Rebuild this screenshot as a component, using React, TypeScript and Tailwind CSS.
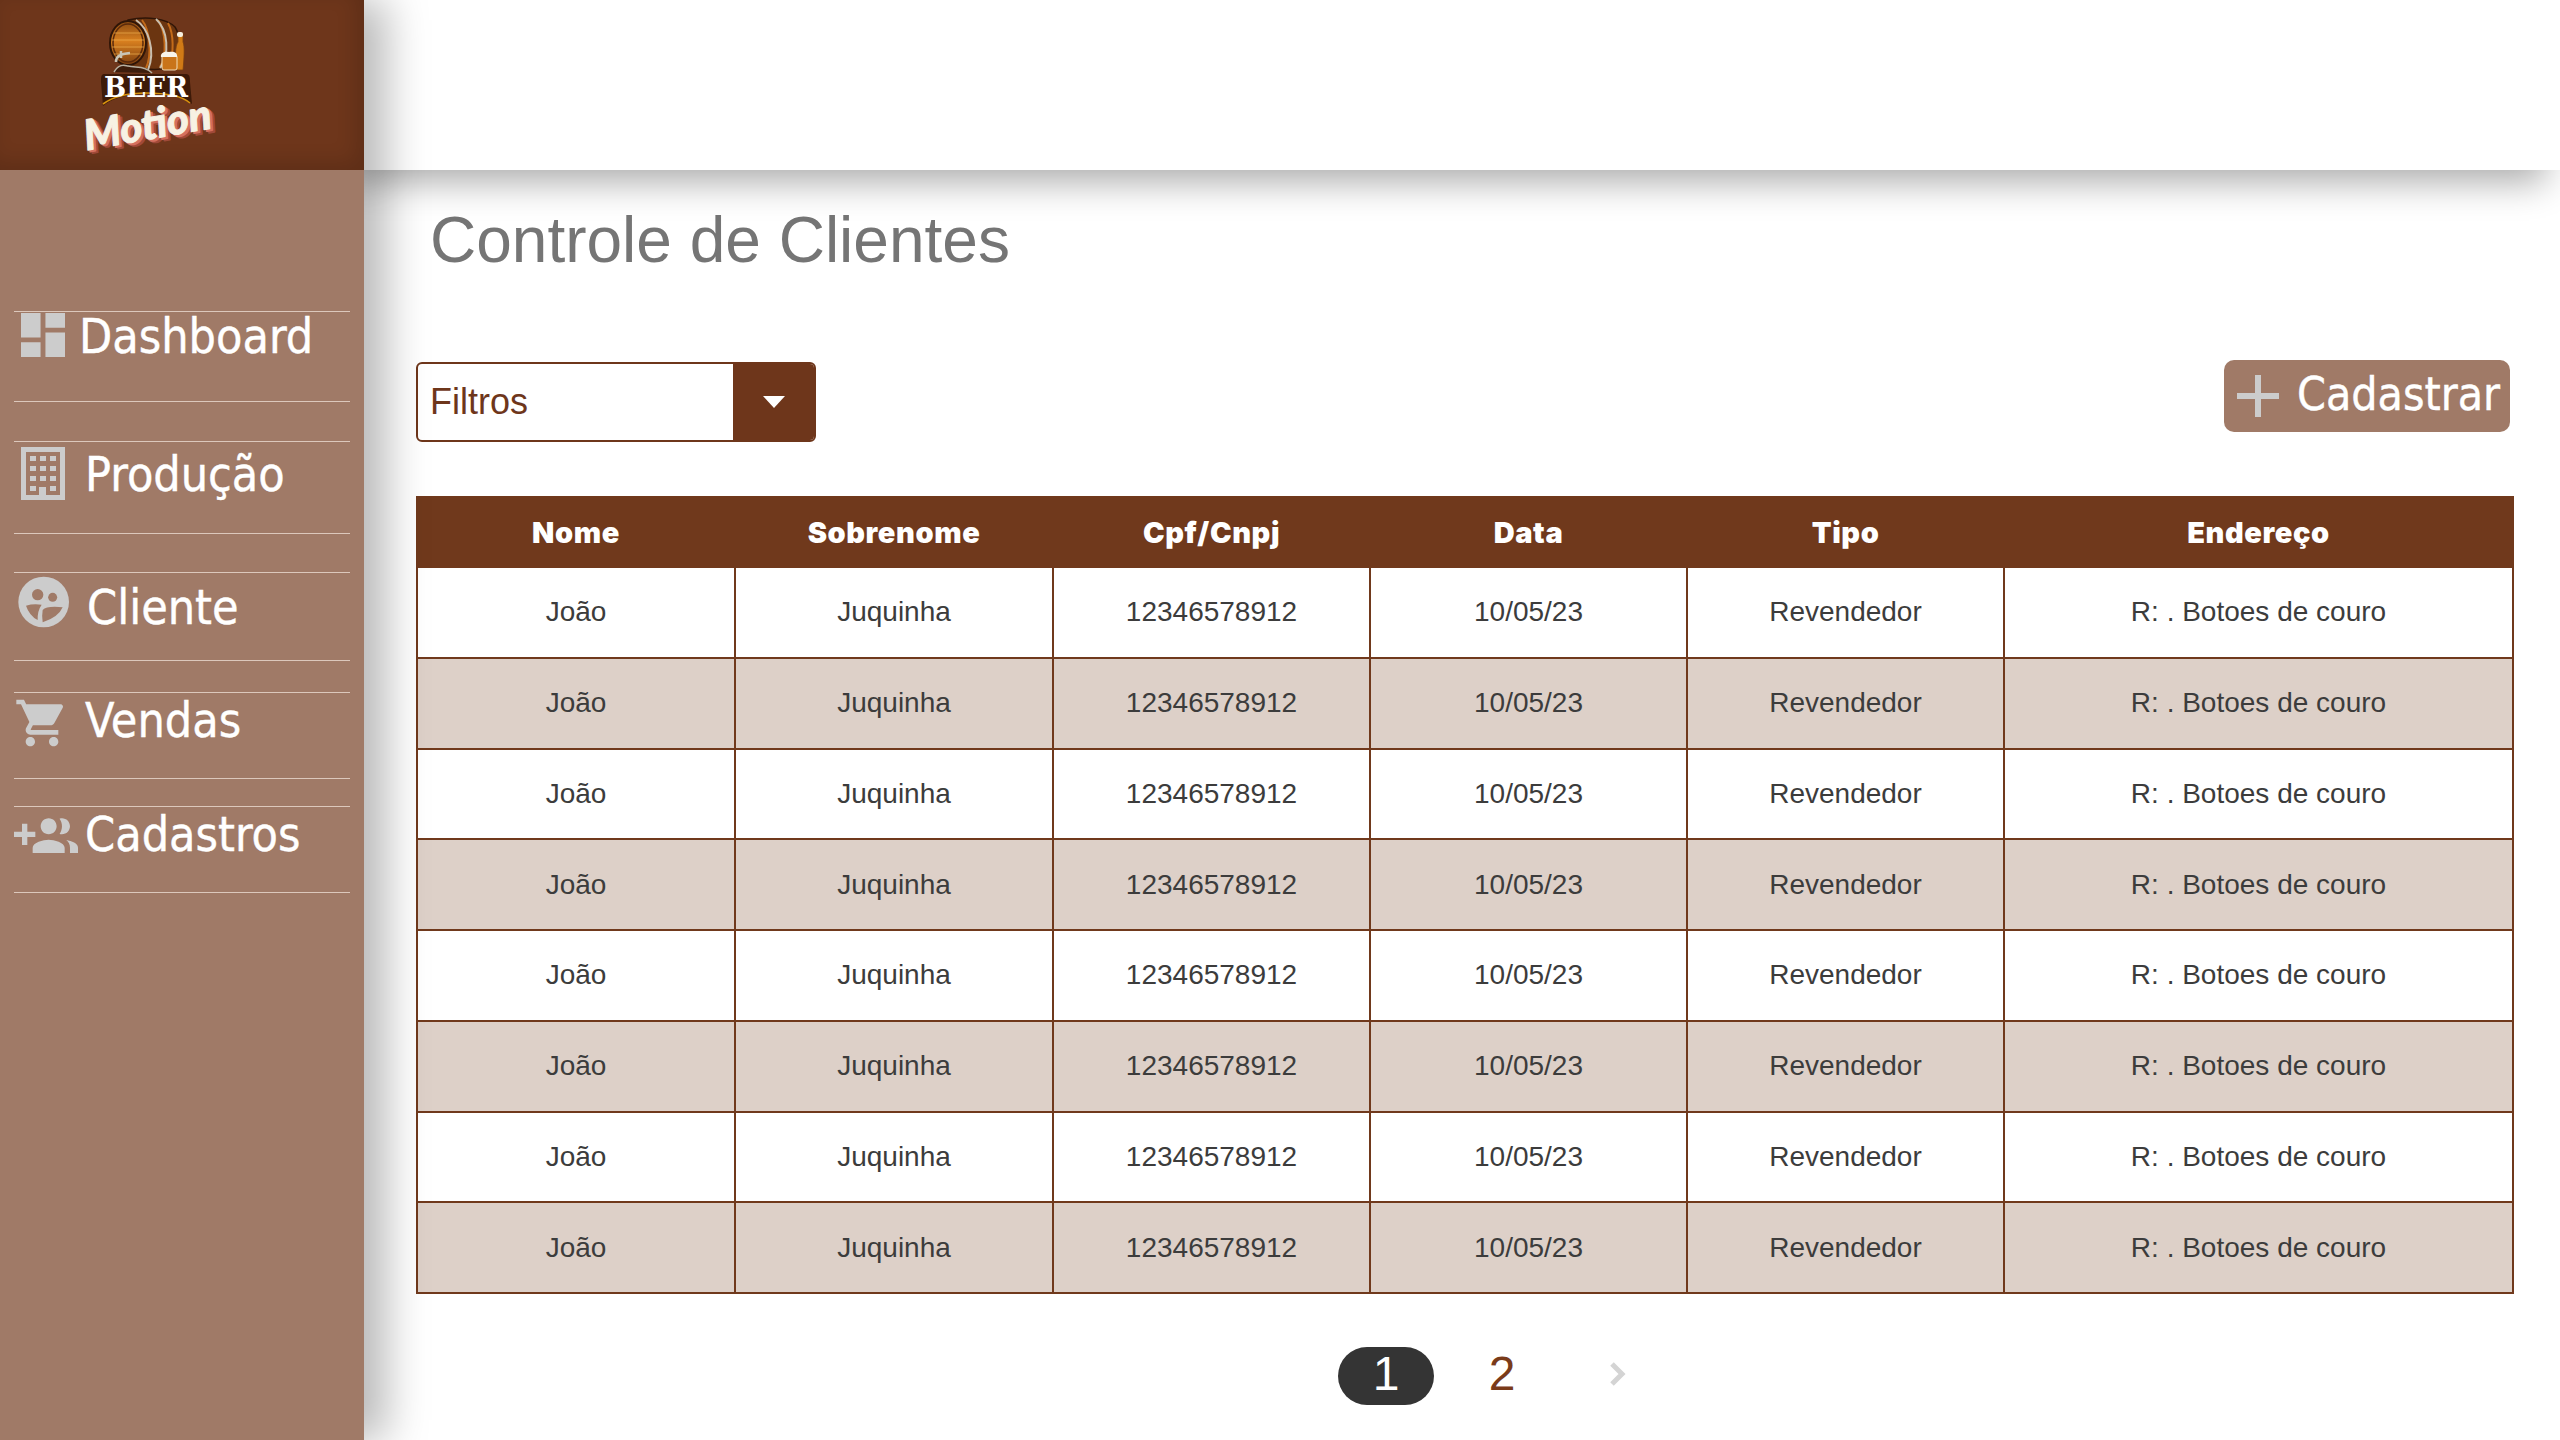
import type { ReactNode } from "react";
import { MdShoppingCart } from "react-icons/md";

const columns = ["Nome", "Sobrenome", "Cpf/Cnpj", "Data", "Tipo", "Endereço"];
const row = ["João", "Juquinha", "12346578912", "10/05/23", "Revendedor", "R: . Botoes de couro"];
const rows = [0, 1, 2, 3, 4, 5, 6, 7];

function Logo() {
  return (
    <svg viewBox="0 0 364 170" className="w-[364px] h-[170px]">
      <defs>
        <linearGradient id="wood" x1="0" y1="0" x2="0" y2="1">
          <stop offset="0" stopColor="#8a4a12" />
          <stop offset="0.45" stopColor="#d9801f" />
          <stop offset="1" stopColor="#7d3f10" />
        </linearGradient>
      </defs>
      {/* barrel */}
      <path d="M128 20C146 16 166 18 175 27C181 36 181 55 174 64C165 72 146 70 128 66Z" fill="#6b3510" stroke="#2f1507" strokeWidth="1.5" />
      <path d="M142 20C150 30 152 55 146 68M158 20C166 32 167 56 160 67M168 23C174 34 174 54 169 64" fill="none" stroke="#c36b1a" strokeWidth="2" />
      <path d="M136 20C148 28 156 50 148 70" fill="none" stroke="#c9bfae" strokeWidth="2" />
      <path d="M156 19C168 30 170 54 160 68" fill="none" stroke="#c9bfae" strokeWidth="2" />
      <ellipse cx="128" cy="43" rx="18" ry="22" fill="url(#wood)" stroke="#2f1507" strokeWidth="2" />
      <ellipse cx="128" cy="43" rx="15" ry="19" fill="none" stroke="#5a2a0c" strokeWidth="1.5" />
      <path d="M114 33H142M112 40H144M112 47H144M114 54H142" stroke="#f0b050" strokeWidth="1.2" opacity="0.7" />
      {/* tap and stand */}
      <path d="M116 62C116 56 120 54 130 53M121 51V58" fill="none" stroke="#c9c4b5" strokeWidth="2.5" />
      <path d="M114 72C120 62 126 66 128 66C136 68 146 66 152 73" fill="#3d1d0c" stroke="#b8b0a0" strokeWidth="1.5" />
      {/* bottle and mug */}
      <path d="M178 33H183V42C185 46 184 60 183 70H176C175 58 175 46 178 42Z" fill="#d07a16" stroke="#7a3f10" strokeWidth="0.8" />
      <rect x="177" y="32" width="6" height="5" rx="2" fill="#f6f0e2" />
      <rect x="162" y="55" width="15" height="15" rx="2" fill="#c9741a" stroke="#f0dcb8" strokeWidth="1" />
      <path d="M161 57C160 52 166 51 169 52C173 51 178 52 177 57Z" fill="#f8f4ea" />
      {/* badge */}
      <path d="M104 74H186C190 74 190 78 190 82L192 104C182 96 166 94 146 94C128 94 112 98 103 106L101 82C101 78 101 74 104 74Z" fill="#3d1a08" />
      <path d="M103 104C114 96 128 93 146 93C166 93 182 96 190 103" fill="none" stroke="#d8930e" strokeWidth="1.6" />
      <text x="146" y="97" textAnchor="middle" fontFamily="'DejaVu Serif', serif" fontWeight="900" fontSize="27" textLength="84" lengthAdjust="spacingAndGlyphs" fill="#ffffff">BEER</text>
      {/* script */}
      <g transform="rotate(-10 150 128)" fontFamily="Lato, sans-serif" fontStyle="italic" fontWeight="900" fontSize="42" textAnchor="middle" strokeLinejoin="round">
        <text x="152" y="143" fill="#a04a3a" stroke="#a04a3a" strokeWidth="1.5">Motion</text>
        <text x="150" y="141" fill="#d4705f" stroke="#d4705f" strokeWidth="1.5">Motion</text>
        <text x="148" y="139" fill="#f7f1e3" stroke="#f7f1e3" strokeWidth="1">Motion</text>
      </g>
    </svg>
  );
}

function ProductionIcon() {
  const cells = [
    [9, 9], [19, 9], [29, 9],
    [9, 19], [19, 19], [29, 19],
    [9, 29], [19, 29], [29, 29],
    [9, 39], [29, 39],
  ];
  return (
    <svg viewBox="0 0 44 53" className="w-11 h-[53px] ml-[7px] mt-[5px]">
      <path fillRule="evenodd" d="M0 0H44V53H0ZM5 5V48H18V40H25V48H39V5Z" fill="#cccccc" />
      {cells.map(([x, y]) => (
        <rect key={`${x}-${y}`} x={x} y={y} width="6" height="5" fill="#cccccc" />
      ))}
    </svg>
  );
}

function ClientIcon() {
  return (
    <svg viewBox="54 46 156 156" className="w-[52px] h-[52px] ml-1 mt-[3px]">
      <circle cx="131" cy="124" r="76" fill="#cccccc" />
      <circle cx="113" cy="102" r="17" fill="#a07a67" />
      <circle cx="158" cy="110" r="13.5" fill="#a07a67" />
      <path d="M78 135Q100 128 125 132Q112 150 113 178Q88 165 78 135Z" fill="#a07a67" />
      <path d="M128 148Q140 135 188 140Q175 170 128 185Q125 165 128 148Z" fill="#a07a67" />
    </svg>
  );
}

function NavItem({ icon, label, className, textClass }: { icon: ReactNode; label: string; className: string; textClass: string }) {
  return (
    <div className={`flex items-start mx-[14px] border-y border-[#dcc8bc] ${className}`}>
      {icon}
      <span className={`text-[48px] leading-[48px] text-white [-webkit-text-stroke:0.4px_white] font-['DejaVu_Sans_Condensed','DejaVu_Sans',sans-serif] ${textClass}`}>
        {label}
      </span>
    </div>
  );
}

export default function App() {
  return (
    <div className="flex h-screen overflow-hidden bg-white font-['Liberation_Sans',sans-serif]">
      <aside className="relative z-20 w-[364px] shrink-0 bg-[#a07a67] shadow-[22px_0_40px_rgba(0,0,0,0.28)]">
        <div className="h-[170px] bg-[#6e361b] shadow-[inset_-8px_-8px_20px_rgba(0,0,0,0.14)]">
          <Logo />
        </div>
        <nav className="pt-[141px]">
          <NavItem
            label="Dashboard"
            className="h-[91px]"
            textClass="ml-3.5"
            icon={
              <svg viewBox="3 3 18 18" className="w-11 h-11 ml-[7px] mt-px" fill="#cccccc">
                <path d="M3 13h8V3H3v10zm0 8h8v-6H3v6zm10 0h8V11h-8v10zm0-18v6h8V3h-8z" />
              </svg>
            }
          />
          <NavItem label="Produção" className="h-[93px] mt-[39px]" textClass="ml-5 pt-2" icon={<ProductionIcon />} />
          <NavItem label="Cliente" className="h-[89px] mt-[38px]" textClass="ml-[17px] pt-2.5" icon={<ClientIcon />} />
          <NavItem
            label="Vendas"
            className="h-[87px] mt-[31px]"
            textClass="ml-[15px] pt-[3px]"
            icon={<MdShoppingCart className="w-14 h-14 mt-0.5 text-[#cccccc]" />}
          />
          <NavItem
            label="Cadastros"
            className="h-[87px] mt-[27px]"
            textClass="ml-[7px] pt-[3px]"
            icon={
              <svg viewBox="0 0 24 24" className="w-16 h-16 -mt-0.5" fill="#cccccc">
                <path d="M8 10H5V7H3v3H0v2h3v3h2v-3h3v-2zm10 1c1.66 0 2.99-1.34 2.99-3S19.66 5 18 5c-.32 0-.63.05-.91.14.57.81.9 1.79.9 2.86s-.34 2.04-.9 2.86c.28.09.59.14.91.14zm-5 0c1.66 0 2.99-1.34 2.99-3S14.66 5 13 5s-3 1.34-3 3 1.34 3 3 3zm6.62 2.16c.83.73 1.38 1.66 1.38 2.84v2h3v-2c0-1.54-2.37-2.49-4.38-2.84zM13 13c-2 0-6 1-6 3v2h12v-2c0-2-4-3-6-3z" />
              </svg>
            }
          />
        </nav>
      </aside>

      <main className="flex-1 min-w-0">
        <div className="relative z-10 h-[170px] bg-white shadow-[-14px_12px_34px_rgba(0,0,0,0.33)]" />
        <div className="pl-[52px] pr-[46px]">
          <h1 className="mt-[30px] h-20 pl-3.5 text-[64px] leading-[80px] text-[#757575]">Controle de Clientes</h1>

          <div className="flex items-start justify-between mt-20">
            <div className="flex mt-0.5 w-[400px] h-20 rounded-md border-2 border-[#6e361b] overflow-hidden">
              <div className="flex-1 flex items-center pl-3 text-[36px] text-[#6e361b]">Filtros</div>
              <div className="w-[81px] flex items-center justify-center bg-[#6e361b]">
                <svg viewBox="0 0 22 12" className="w-[22px] h-3" fill="#ffffff">
                  <path d="M0 0H22L11 12Z" />
                </svg>
              </div>
            </div>
            <button className="flex items-center w-[286px] h-[72px] mr-1 pl-[13px] rounded-[10px] bg-[#a07a67]">
              <svg viewBox="0 0 42 42" className="w-[42px] h-[42px]" fill="#cccccc">
                <path d="M18 0H24V18H42V24H24V42H18V24H0V18H18Z" />
              </svg>
              <span className="ml-[18px] mb-[5px] text-[46px] leading-[48px] text-white [-webkit-text-stroke:0.4px_white] font-['DejaVu_Sans_Condensed','DejaVu_Sans',sans-serif]">
                Cadastrar
              </span>
            </button>
          </div>

          <table className="mt-[54px] w-full table-fixed border-collapse text-[28px] text-[#3c3c3c]">
            <colgroup>
              <col className="w-[318px]" />
              <col className="w-[318px]" />
              <col className="w-[317px]" />
              <col className="w-[317px]" />
              <col className="w-[317px]" />
              <col />
            </colgroup>
            <thead>
              <tr className="h-[70px] bg-[#70391c] text-white">
                {columns.map((c) => (
                  <th key={c} className="p-0 pt-0.5 border-2 border-[#70391c] font-black text-[29px] tracking-[0.6px] font-['Inter',sans-serif]">
                    {c}
                  </th>
                ))}
              </tr>
            </thead>
            <tbody>
              {rows.map((i) => (
                <tr key={i} className={i % 2 === 0 ? "bg-white" : "bg-[#ddd0c8]"}>
                  {row.map((cell, j) => (
                    <td key={j} className="h-[90.75px] p-0 text-center border-2 border-[#70391c]">
                      {cell}
                    </td>
                  ))}
                </tr>
              ))}
            </tbody>
          </table>

          <div className="flex items-center gap-5 mt-[53px] ml-[922px]">
            <div className="w-24 h-[58px] pb-1 flex items-center justify-center rounded-full bg-[#343434] text-[48px] text-white">1</div>
            <div className="w-24 h-[58px] pb-1 flex items-center justify-center text-[48px] text-[#7a3b1a]">2</div>
            <div className="w-24 h-[58px] pb-1 flex items-center justify-center">
              <svg viewBox="0 0 16 24" className="w-4 h-6" fill="none" stroke="#d4d4d4" strokeWidth="5">
                <path d="M2 2L12 12L2 22" />
              </svg>
            </div>
          </div>
        </div>
      </main>
    </div>
  );
}
